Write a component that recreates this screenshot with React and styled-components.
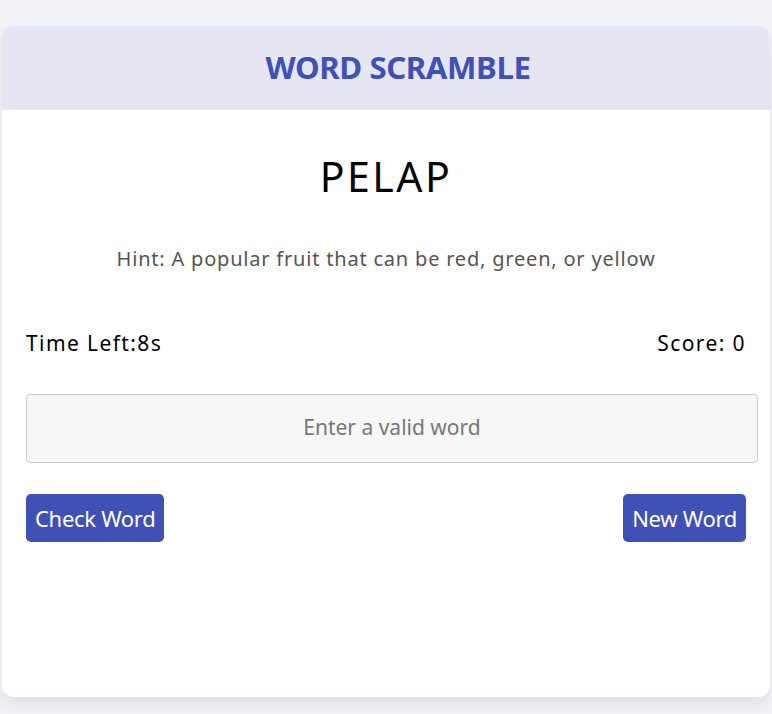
import React from "react";
import styled, { createGlobalStyle } from "styled-components";

const Global = createGlobalStyle`
  html, body { margin: 0; padding: 0; background: #f3f2f8; }
  body { font-family: "Noto Sans", "Open Sans", sans-serif; }
`;

const Page = styled.div`
  padding: 26px 2px 17px;
`;

const Card = styled.div`
  background: #ffffff;
  border-radius: 12px;
  overflow: hidden;
  box-shadow: 0 8px 16px rgba(0, 0, 0, 0.08);
`;

const Header = styled.header`
  height: 84px;
  background: #e6e6f2;
  display: flex;
  align-items: center;
  justify-content: center;
`;

const Title = styled.h1`
  margin: 0 0 2px;
  padding-left: 24px;
  font-size: 31.2px;
  font-weight: 700;
  color: #3f51b5;
  letter-spacing: -0.4px;
`;

const Body = styled.div`
  padding: 42px 24px 155px;
  display: flex;
  flex-direction: column;
`;

const Word = styled.h2`
  margin: 0;
  text-align: center;
  font-size: 41px;
  line-height: 48px;
  font-weight: 400;
  color: #000;
  letter-spacing: 2.5px;
`;

const Hint = styled.p`
  margin: 47px 0 0;
  text-align: center;
  font-size: 20px;
  line-height: 24px;
  color: #555;
  letter-spacing: 0.8px;
`;

const Stats = styled.div`
  margin-top: 60px;
  display: flex;
  justify-content: space-between;
  font-size: 21px;
  line-height: 24px;
  color: #000;
  letter-spacing: 1.4px;
`;

const Input = styled.input`
  margin-top: 39px;
  box-sizing: content-box;
  width: 100%;
  height: 63px;
  padding: 0 5px 4px;
  border: 1px solid #cccccc;
  border-radius: 4px;
  background: #f7f7f7;
  font-family: inherit;
  font-size: 21px;
  text-align: center;
  color: #333;
  outline: none;
  &::placeholder { color: #777; }
`;

const Actions = styled.div`
  margin-top: 31px;
  display: flex;
  justify-content: space-between;
`;

const Button = styled.button`
  height: 48px;
  padding: 0 9px;
  border: none;
  border-radius: 5px;
  background: #3f51b5;
  color: #fff;
  font-family: inherit;
  font-size: 22px;
  letter-spacing: -0.3px;
  cursor: pointer;
`;

export default function App() {
  return (
    <>
      <Global />
      <Page>
        <Card>
          <Header>
            <Title>WORD SCRAMBLE</Title>
          </Header>
          <Body>
            <Word>PELAP</Word>
            <Hint>Hint: A popular fruit that can be red, green, or yellow</Hint>
            <Stats>
              <span>Time Left:8s</span>
              <span>Score: 0</span>
            </Stats>
            <Input placeholder="Enter a valid word" />
            <Actions>
              <Button>Check Word</Button>
              <Button>New Word</Button>
            </Actions>
          </Body>
        </Card>
      </Page>
    </>
  );
}
